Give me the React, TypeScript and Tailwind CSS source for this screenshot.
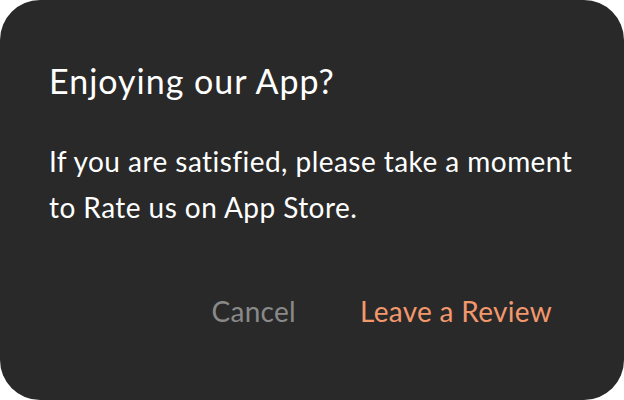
import React from 'react';

const App: React.FC = () => {
  return (
    <div className="w-[624px] h-[400px] bg-white font-['Lato',sans-serif]">
      <div className="w-full h-full bg-[#292929] rounded-[40px] flex flex-col pl-[49px] pr-[72px]">
        <h1 className="mt-[61px] text-[34px] leading-[40px] tracking-[1px] text-white font-normal">
          Enjoying our App?
        </h1>
        <p className="mt-[37px] text-[28px] leading-[46px] tracking-[0.45px] text-white whitespace-nowrap">
          If you are satisfied, please take a moment
          <br />
          to Rate us on App Store.
        </p>
        <div className="mt-auto mb-[73px] flex justify-end items-center gap-[64px]">
          <button className="text-[28px] leading-[32px] tracking-[0.3px] text-[#898989]">Cancel</button>
          <button className="text-[28px] leading-[32px] tracking-[0.3px] text-[#f2986c]">Leave a Review</button>
        </div>
      </div>
    </div>
  );
};

export default App;
